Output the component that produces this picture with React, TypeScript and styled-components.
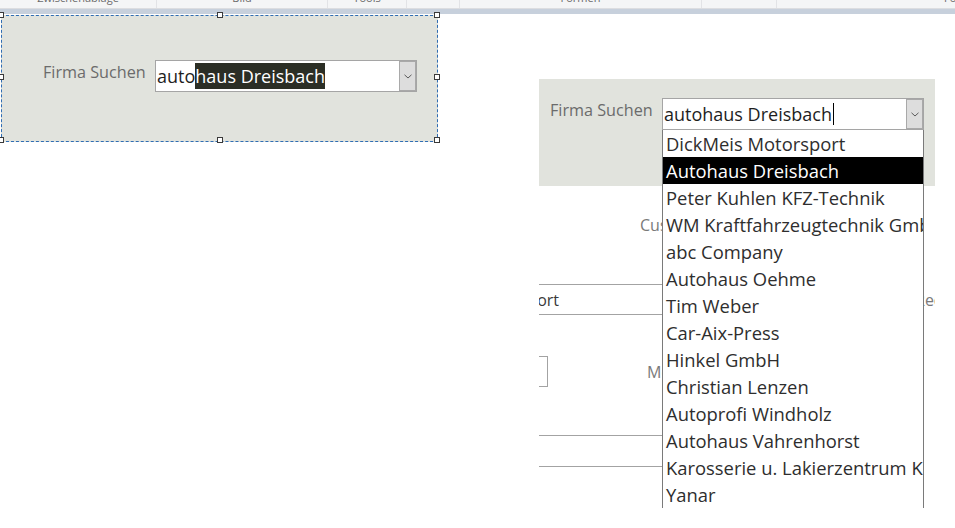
import React from 'react';
import styled, { createGlobalStyle } from 'styled-components';

const GlobalStyle = createGlobalStyle`
  html, body {
    margin: 0;
    padding: 0;
    background: #ffffff;
  }
  body {
    font-family: "Open Sans", "Noto Sans", sans-serif;
    overflow: hidden;
  }
`;

const firmen = [
    'DickMeis Motorsport',
    'Autohaus Dreisbach',
    'Peter Kuhlen KFZ-Technik',
    'WM Kraftfahrzeugtechnik GmbH',
    'abc Company',
    'Autohaus Oehme',
    'Tim Weber',
    'Car-Aix-Press',
    'Hinkel GmbH',
    'Christian Lenzen',
    'Autoprofi Windholz',
    'Autohaus Vahrenhorst',
    'Karosserie u. Lakierzentrum Kerp',
    'Yanar',
];

const ribbonGroups = [
    { w: 157, label: 'Zwischenablage' },
    { w: 171, label: 'Bild' },
    { w: 79, label: 'Tools' },
    { w: 53, label: '' },
    { w: 242, label: 'Formen' },
    { w: 75, label: '' },
    { w: 178, label: 'Formatierung' },
];

function Chevron() {
    return (
        <svg width="8" height="5" viewBox="0 0 8 5">
            <polyline points="0.5,0.8 4,4 7.5,0.8" fill="none" stroke="#5a5a5a" strokeWidth="1" />
        </svg>
    );
}

function App() {
    return (
        <Page>
            <GlobalStyle />
            <Ribbon>
                {ribbonGroups.map((g, i) => (
                    <RibbonGroup key={i} $w={g.w}>
                        <GroupLabel>{g.label}</GroupLabel>
                    </RibbonGroup>
                ))}
            </Ribbon>
            <Band />
            <Workspace>
                <DesignSection>
                    <Handle $x="left" $y="top" />
                    <Handle $x="mid" $y="top" />
                    <Handle $x="right" $y="top" />
                    <Handle $x="left" $y="mid" />
                    <Handle $x="right" $y="mid" />
                    <Handle $x="left" $y="bottom" />
                    <Handle $x="mid" $y="bottom" />
                    <Handle $x="right" $y="bottom" />
                    <FieldLabel>Firma Suchen</FieldLabel>
                    <Combo>
                        <ComboText>
                            auto<Selected>haus Dreisbach</Selected>
                        </ComboText>
                        <ComboButton>
                            <Chevron />
                        </ComboButton>
                    </Combo>
                </DesignSection>

                <FormView>
                    <HeaderPanel>
                        <FieldLabel>Firma Suchen</FieldLabel>
                        <Combo>
                            <ComboText>
                                autohaus Dreisbach<Caret />
                            </ComboText>
                            <ComboButton>
                                <Chevron />
                            </ComboButton>
                        </Combo>
                    </HeaderPanel>

                    <Detail>
                        <DetailRow $gap={26} $h={26}>
                            <DetailLabel $indent={101}>CustomerID</DetailLabel>
                        </DetailRow>
                        <DetailRow $gap={46} $h={31}>
                            <TextBox $left={-160} $width={283} $padRight={103}>DickMeis Motorsport</TextBox>
                            <DetailLabel $indent={253}>Rechnung</DetailLabel>
                        </DetailRow>
                        <DetailRow $gap={41} $h={31}>
                            <CheckFrame />
                            <DetailLabel $indent={99}>Mobil</DetailLabel>
                        </DetailRow>
                        <DetailRow $gap={48} $h={32}>
                            <TextBox $left={-160} $width={283} $padRight={0} />
                        </DetailRow>
                    </Detail>

                    <DropList>
                        {firmen.map((f, i) => (
                            <DropItem key={f} $active={i === 1}>{f}</DropItem>
                        ))}
                    </DropList>
                </FormView>
            </Workspace>
        </Page>
    );
}

const Page = styled.div`
    width: 955px;
    height: 528px;
    overflow: hidden;
    background: #ffffff;
`;

const Ribbon = styled.div`
    display: flex;
    height: 8px;
    overflow: hidden;
    background: #f4f5f6;
    border-bottom: 1px solid #dcdde0;
`;

const RibbonGroup = styled.div<{ $w: number }>`
    display: flex;
    justify-content: center;
    flex: none;
    width: ${p => p.$w}px;
    box-sizing: border-box;
    border-right: 1px solid #e2e3e6;
    overflow: hidden;

    font-size: 11px;
    line-height: 14px;
    color: #6a6a6a;

    &:last-child {
        border-right: none;
        justify-content: flex-start;
        padding-left: 167px;
    }
`;

const GroupLabel = styled.span`
    margin-top: -9px;
    white-space: nowrap;
`;

const Band = styled.div`
    height: 5px;
    background: #c7d0dc;
`;

const Workspace = styled.div`
    display: flex;
    align-items: flex-start;
`;

const DesignSection = styled.div`
    position: relative;
    display: flex;
    align-items: flex-start;
    box-sizing: border-box;

    width: 437px;
    height: 127px;
    margin-top: 1px;
    margin-left: 1px;
    padding: 44px 0 0 41px;
    gap: 7px;

    background: #e1e3dd;
    border: 1px dashed #2f6db3;
`;

const Handle = styled.div<{ $x: 'left' | 'mid' | 'right'; $y: 'top' | 'mid' | 'bottom' }>`
    position: absolute;
    width: 4px;
    height: 4px;
    background: #ffffff;
    border: 1px solid #3a3a3a;
    left: ${p => (p.$x === 'left' ? '-4px' : p.$x === 'mid' ? '215px' : '432px')};
    top: ${p => (p.$y === 'top' ? '-4px' : p.$y === 'mid' ? '58px' : '121px')};
`;

const FieldLabel = styled.span`
    flex: none;
    width: 105px;
    margin-top: 2px;
    font-size: 16.2px;
    line-height: 20px;
    color: #6b6b6b;
    white-space: nowrap;
`;

const Combo = styled.div`
    display: flex;
    flex: none;
    box-sizing: border-box;
    width: 262px;
    height: 32px;
    background: #ffffff;
    border: 1px solid #a5a5a5;
`;

const ComboText = styled.div`
    display: flex;
    align-items: center;
    flex: 1;
    padding-left: 1px;
    font-size: 18px;
    color: #1e1e1e;
    white-space: nowrap;
    overflow: hidden;
`;

const Selected = styled.span`
    display: inline-flex;
    align-items: center;
    height: 26px;
    background: #2b2e25;
    color: #ffffff;
`;

const Caret = styled.span`
    display: inline-block;
    width: 1px;
    height: 22px;
    margin-left: 1px;
    background: #000000;
`;

const ComboButton = styled.div`
    display: flex;
    align-items: center;
    justify-content: center;
    box-sizing: border-box;
    width: 17px;
    background: #dddddd;
    border: 1px solid #a9a9a9;
`;

const FormView = styled.div`
    position: relative;
    flex: none;
    width: 396px;
    height: 449px;
    margin-top: 65px;
    margin-left: 101px;
    overflow: hidden;
`;

const HeaderPanel = styled.div`
    display: flex;
    align-items: flex-start;
    box-sizing: border-box;
    height: 107px;
    padding: 19px 0 0 11px;
    gap: 7px;
    background: #e1e3dd;
`;

const Detail = styled.div`
    display: flex;
    flex-direction: column;
`;

const DetailRow = styled.div<{ $gap: number; $h: number }>`
    display: flex;
    align-items: center;
    height: ${p => p.$h}px;
    margin-top: ${p => p.$gap}px;
`;

const DetailLabel = styled.span<{ $indent: number }>`
    margin-left: ${p => p.$indent}px;
    font-size: 16px;
    color: #7a7a7a;
    white-space: nowrap;
`;

const TextBox = styled.div<{ $left: number; $width: number; $padRight: number }>`
    display: flex;
    align-items: center;
    justify-content: flex-end;
    flex: none;
    box-sizing: border-box;
    height: 100%;
    width: ${p => p.$width}px;
    margin-left: ${p => p.$left}px;
    padding-right: ${p => p.$padRight}px;
    border-top: 1px solid #a3a3a3;
    border-bottom: 1px solid #a3a3a3;
    font-size: 16px;
    color: #3a3a3a;
    white-space: nowrap;
`;

const CheckFrame = styled.div`
    flex: none;
    box-sizing: border-box;
    width: 9px;
    height: 100%;
    border: 1px solid #a3a3a3;
    border-left: none;
`;

const DropList = styled.div`
    position: absolute;
    top: 51px;
    left: 123px;
    box-sizing: border-box;
    width: 262px;
    background: #ffffff;
    border-left: 1px solid #7a7a7a;
    border-right: 1px solid #7a7a7a;
`;

const DropItem = styled.div<{ $active: boolean }>`
    height: 27px;
    padding-left: 3px;
    font-size: 18.4px;
    line-height: 27px;
    white-space: nowrap;
    overflow: hidden;
    color: ${p => (p.$active ? '#ffffff' : '#2e2e2e')};
    background: ${p => (p.$active ? '#000000' : 'transparent')};
`;

export default App;
